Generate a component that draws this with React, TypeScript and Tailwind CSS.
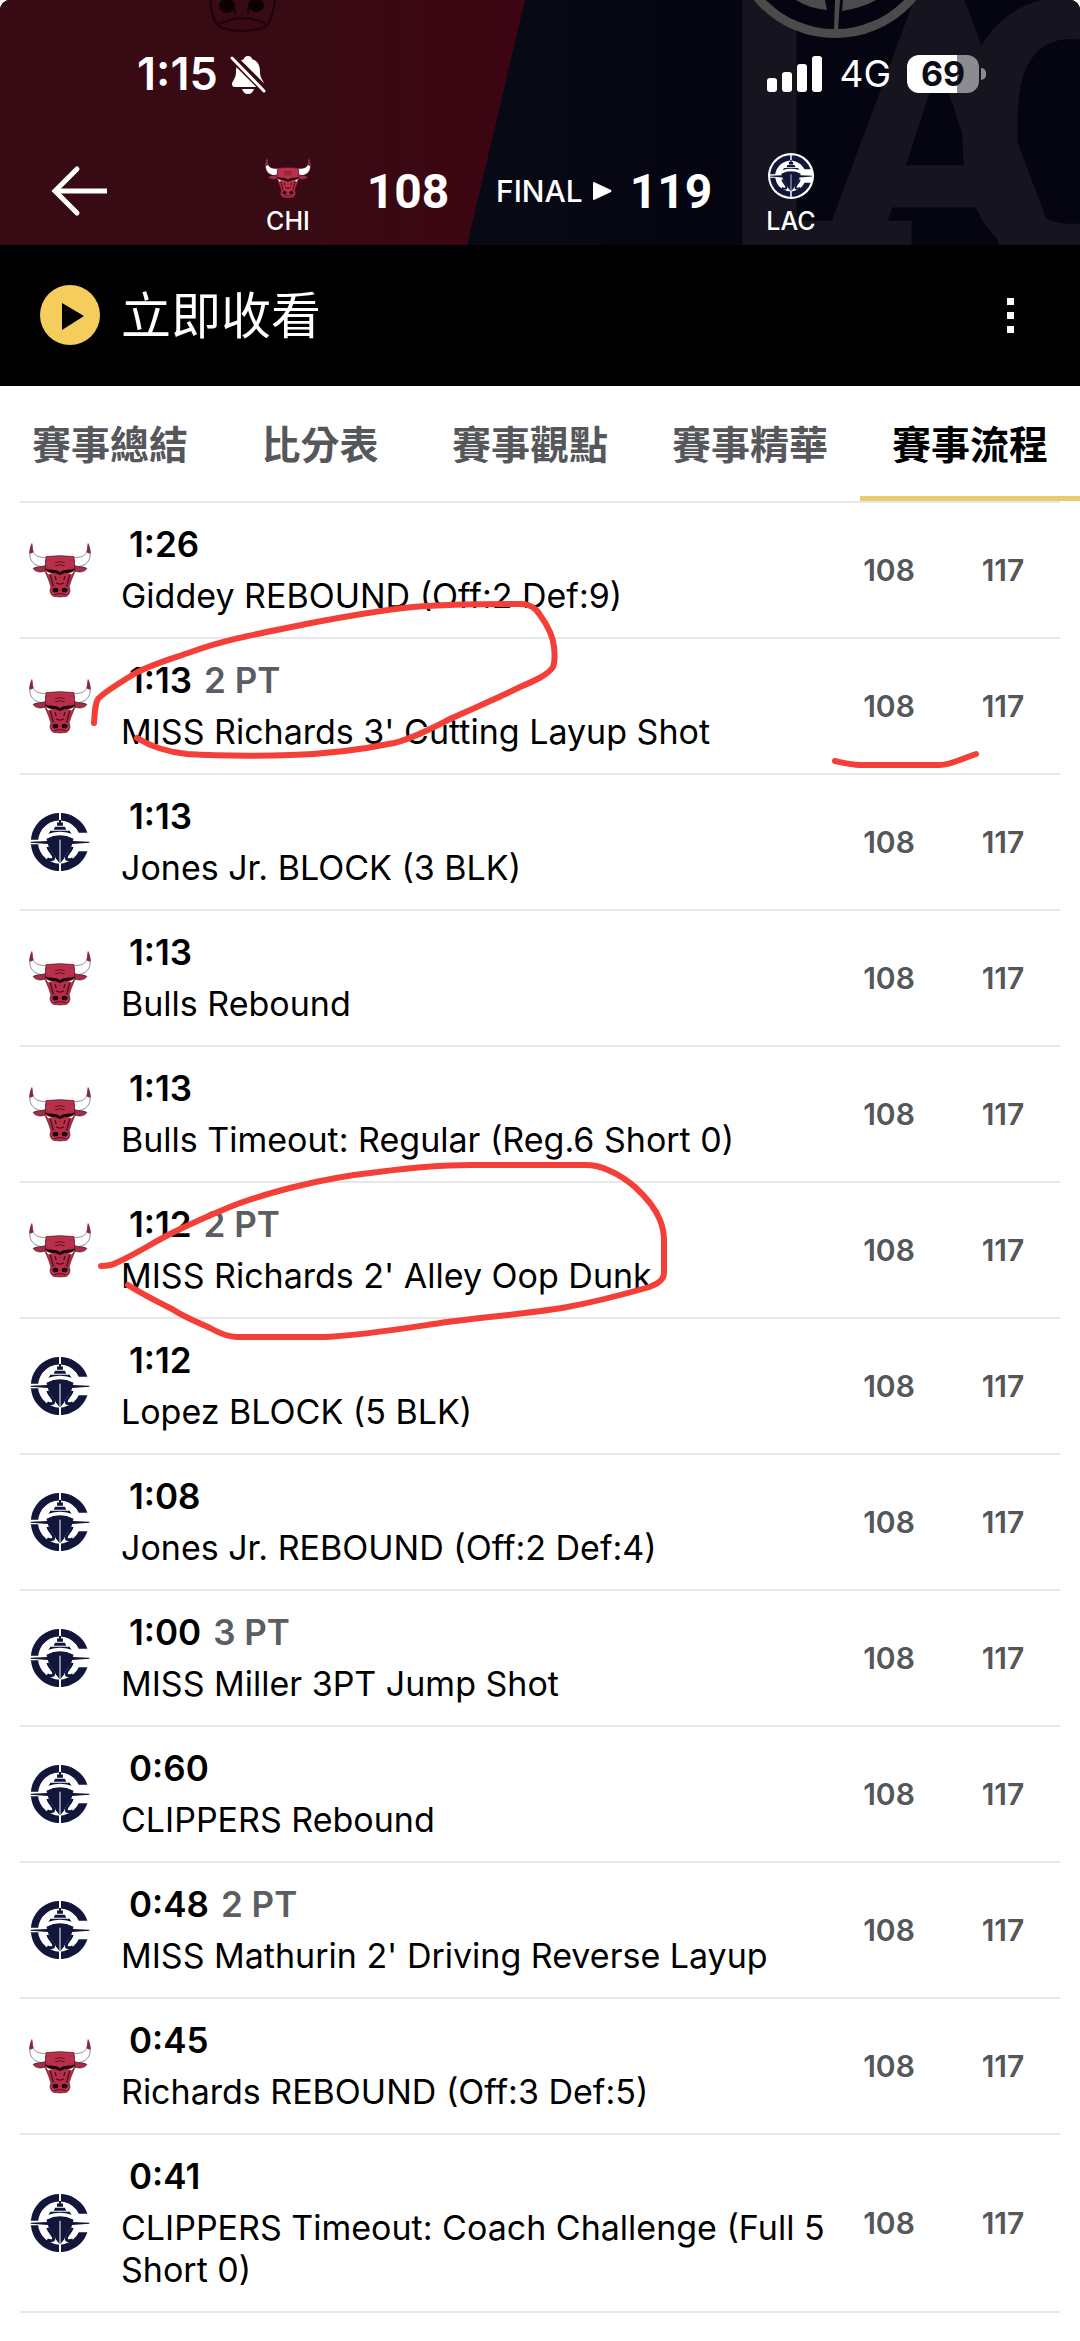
import React, { useState } from 'react';
import clsx from 'clsx';

type Team = 'CHI' | 'LAC';

interface Play {
  team: Team;
  time: string;
  tag?: string;
  text?: string;
  away: number;
  home: number;
}

const TABS = ['賽事總結', '比分表', '賽事觀點', '賽事精華', '賽事流程'];

const PLAYS: Play[] = [
  { team: 'CHI', time: '1:26', text: 'Giddey REBOUND (Off:2 Def:9)', away: 108, home: 117 },
  { team: 'CHI', time: '1:13', tag: '2 PT', text: "MISS Richards 3' Cutting Layup Shot", away: 108, home: 117 },
  { team: 'LAC', time: '1:13', text: 'Jones Jr. BLOCK (3 BLK)', away: 108, home: 117 },
  { team: 'CHI', time: '1:13', text: 'Bulls Rebound', away: 108, home: 117 },
  { team: 'CHI', time: '1:13', text: 'Bulls Timeout: Regular (Reg.6 Short 0)', away: 108, home: 117 },
  { team: 'CHI', time: '1:12', tag: '2 PT', text: "MISS Richards 2' Alley Oop Dunk", away: 108, home: 117 },
  { team: 'LAC', time: '1:12', text: 'Lopez BLOCK (5 BLK)', away: 108, home: 117 },
  { team: 'LAC', time: '1:08', text: 'Jones Jr. REBOUND (Off:2 Def:4)', away: 108, home: 117 },
  { team: 'LAC', time: '1:00', tag: '3 PT', text: 'MISS Miller 3PT Jump Shot', away: 108, home: 117 },
  { team: 'LAC', time: '0:60', text: 'CLIPPERS Rebound', away: 108, home: 117 },
  { team: 'LAC', time: '0:48', tag: '2 PT', text: "MISS Mathurin 2' Driving Reverse Layup", away: 108, home: 117 },
  { team: 'CHI', time: '0:45', text: 'Richards REBOUND (Off:3 Def:5)', away: 108, home: 117 },
  { team: 'LAC', time: '0:41', text: 'CLIPPERS Timeout: Coach Challenge (Full 5 Short 0)', away: 108, home: 117 },
];

const BullsLogo: React.FC<{ className?: string }> = ({ className }) => (
  <svg viewBox="22 40 196 174" className={className} role="img" aria-label="CHI">
    {/* horns */}
    <path d="M34 46 C22 74 24 104 52 114 C60 117 70 117 76 114 L78 88 C56 90 40 84 36 66 Z" fill="#fff" stroke="#26141a" strokeWidth="1.5" />
    <path d="M206 46 C218 74 216 104 188 114 C180 117 170 117 164 114 L162 88 C184 90 200 84 204 66 Z" fill="#fff" stroke="#26141a" strokeWidth="1.5" />
    <path d="M34 46 C28 56 26 68 27 78 L39 73 C36 66 37 54 34 46 Z M206 46 C212 56 214 68 213 78 L201 73 C204 66 203 54 206 46 Z" fill="#8a2438" />
    {/* ears */}
    <path d="M76 114 C62 118 48 116 38 122 C42 132 58 136 76 130 Z M164 114 C178 118 192 116 202 122 C198 132 182 136 164 130 Z" fill="#a82a45" stroke="#26141a" strokeWidth="2" />
    {/* head */}
    <path d="M78 86 Q120 80 162 86 C166 100 163 112 166 126 C164 140 158 148 154 160 L148 178 C154 192 148 206 138 208 Q120 211 102 208 C92 206 86 192 92 178 L86 160 C82 148 76 140 74 126 C77 112 74 100 78 86 Z" fill="#b92e48" stroke="#4a1220" strokeWidth="2" />
    <path d="M104 105 Q120 97 136 105 M106 114 Q120 108 134 114" fill="none" stroke="#5a1525" strokeWidth="3" />
    {/* brows and eyes */}
    <path d="M74 122 C90 130 106 122 120 134 C134 122 150 130 166 122 C162 134 148 136 138 136 C130 136 124 142 120 142 C116 142 110 136 102 136 C92 136 78 134 74 122 Z" fill="#160a0e" />
    <path d="M78 131 L93 138 L84 141 Z M162 131 L147 138 L156 141 Z" fill="#fff" />
    {/* nose lines */}
    <path d="M90 142 L100 178 M150 142 L140 178 M105 146 L108 158 M135 146 L132 158 M108 166 Q120 174 132 166" fill="none" stroke="#3b0d19" strokeWidth="4" />
    <ellipse cx="106" cy="188" rx="9" ry="7" fill="#160a0e" />
    <ellipse cx="134" cy="188" rx="9" ry="7" fill="#160a0e" />
    <path d="M102 202 Q120 196 138 202" fill="none" stroke="#4a1220" strokeWidth="3" />
  </svg>
);

const ClippersLogo: React.FC<{ className?: string }> = ({ className }) => (
  <svg viewBox="24 34 194 194" className={className} role="img" aria-label="LAC">
    <circle cx="121" cy="131" r="97" fill="#fff" />
    {/* broken C ring */}
    <path d="M204 103 A88 88 0 1 0 204 159 L178 159 A65 65 0 1 1 178 103 Z" fill="#11163a" />
    <path d="M118 40 H124 V72 H118 Z M118 186 H124 V222 H118 Z M30 124 H78 V138 H30 Z" fill="#fff" />
    {/* bridge */}
    <path d="M112 72 H118 V64 H124 V72 H130 V82 H112 Z M106 85 H136 L140 94 H102 Z" fill="#11163a" />
    <path d="M92 97 H150 L156 106 Q121 94 86 106 Z" fill="#11163a" />
    {/* hull */}
    <path d="M80 121 Q121 100 162 121 L160 128 L210 130 V133 L158 137 C152 156 138 166 133 182 L121 196 L109 182 C104 166 90 156 84 137 L32 133 V130 L82 128 Z" fill="#11163a" />
    <path d="M84 146 C88 160 102 168 102 178 C102 186 92 186 82 182 M158 146 C154 160 140 168 140 178 C140 186 150 186 160 182" fill="none" stroke="#11163a" strokeWidth="9" />
    <path d="M121 124 V198" stroke="#fff" strokeWidth="3" />
  </svg>
);

const TeamLogo: React.FC<{ team: Team; className?: string }> = ({ team, className }) =>
  team === 'CHI' ? <BullsLogo className={className} /> : <ClippersLogo className={className} />;

const HeaderArt = () => (
  <div className="absolute inset-0" aria-hidden="true">
    <svg viewBox="0 0 1080 245" preserveAspectRatio="none" className="absolute inset-0 h-full w-full">
      <defs>
        <linearGradient id="away" x1="0" x2="1">
          <stop offset="0.6" stopColor="#380a13" />
          <stop offset="1" stopColor="#3d0412" />
        </linearGradient>
        <linearGradient id="home" x1="0" x2="1">
          <stop offset="0.4" stopColor="#080b16" />
          <stop offset="0.65" stopColor="#050511" />
        </linearGradient>
      </defs>
      <path d="M0 0H1080V245H0Z" fill="url(#home)" />
      <path d="M0 0H525L467 245H0Z" fill="url(#away)" />
    </svg>
    <div className="absolute -top-12 left-[719px] flex font-['Roboto',sans-serif] text-[370px] leading-[370px] font-bold text-[#15141f]">
      <span className="w-[96px]">L</span>
      <span className="w-[132px]">A</span>
      <span>C</span>
    </div>
    <svg viewBox="0 0 1080 245" className="absolute inset-0 h-full w-full" fill="none">
      {/* muzzle of the large bull */}
      <path d="M210 -4C211 14 214 25 222 28Q242 34 262 28C270 25 274 14 275 -4" stroke="#1c0509" strokeWidth="2" />
      <ellipse cx="227" cy="6" rx="8" ry="7" fill="#0c0204" />
      <ellipse cx="256" cy="5" rx="8" ry="7" fill="#0c0204" />
      <path d="M219 24Q242 13 265 23M235 8V14M248 8V14" stroke="#1c0509" strokeWidth="2" />
      {/* large ring */}
      <circle cx="835" cy="-68" r="106" fill="#4b4b4b" />
      <circle cx="835" cy="-68" r="97" fill="#050511" />
      <path d="M796 0Q808 8 827 10L825 0ZM843 0L842 11Q862 8 876 0Z" fill="#4b4b4b" />
      <path d="M834 30L835 0H840L838 30Z" fill="#4b4b4b" />
    </svg>
  </div>
);

const StatusBar = () => (
  <div className="relative flex items-center justify-between pt-[52px] pr-[94px] pl-[137px] text-white">
    <div className="flex items-center gap-3">
      <span className="text-[45px] leading-[44px] font-semibold">1:15</span>
      <svg width="36" height="40" viewBox="0 0 36 40" aria-label="Silent">
        <path d="M18 2C21 2 22 4 22 5C28 7 30 12 30 18C30 25 34 27 34 30C34 32 33 33 31 33H5C3 33 2 32 2 30C2 27 6 25 6 18C6 12 8 7 14 5C14 4 15 2 18 2Z" fill="#fff" />
        <path d="M12 35H24C23 38 21 40 18 40C15 40 13 38 12 35Z" fill="#fff" />
        <path d="M2 3L35 36" stroke="#380a13" strokeWidth="8" />
        <path d="M2 4L34 37" stroke="#fff" strokeWidth="3" strokeLinecap="round" />
      </svg>
    </div>
    <div className="flex items-center">
      <svg width="56" height="36" viewBox="0 0 56 36" fill="#fff" aria-label="Signal">
        <rect x="0" y="22" width="10" height="14" rx="3" />
        <rect x="15" y="16" width="10" height="20" rx="3" />
        <rect x="30" y="8" width="10" height="28" rx="3" />
        <rect x="45" y="0" width="10" height="36" rx="3" />
      </svg>
      <span className="ml-4 text-[37px] leading-[44px] font-normal">4G</span>
      <span className="ml-4 flex h-[38px] w-[72px] items-center justify-center rounded-xl bg-linear-to-r from-white from-70% to-[#8b8b90] to-70% text-[34px] leading-[38px] font-bold text-[#0d0d18]">
        69
      </span>
      <span className="ml-[2px] h-3 w-[5px] rounded-r-full bg-[#8b8b90]" />
    </div>
  </div>
);

const ScoreHeader = () => (
  <div className="relative flex items-start pt-[49px] text-white">
    <button type="button" aria-label="Back" className="mt-[18px] ml-[50px] h-[56px] w-[60px]">
      <svg width="60" height="56" viewBox="0 0 60 56" fill="none" stroke="#fff" strokeWidth="5" strokeLinecap="round">
        <path d="M27 6L5 28L27 50" />
        <path d="M5 28H57" strokeLinecap="butt" />
      </svg>
    </button>
    <div className="ml-[128px] flex w-[100px] flex-col items-center pt-2">
      <BullsLogo className="mt-1 h-[42px] w-12" />
      <span className="mt-[6px] text-[25px] leading-8 font-medium">CHI</span>
    </div>
    <span className="mt-[17px] w-[140px] text-center font-['Roboto',sans-serif] text-[48px] leading-[60px] font-bold">108</span>
    <a href="#final" className="mt-[28px] ml-[18px] flex w-[116px] items-center justify-between text-[30px] leading-9 font-medium">
      FINAL
      <svg width="19" height="18" viewBox="0 0 19 18" fill="#fff" aria-hidden="true">
        <path d="M1 0L18 8Q19 9 18 10L1 18Q0 18 0 17V1Q0 0 1 0Z" />
      </svg>
    </a>
    <span className="mt-[17px] w-[118px] text-center font-['Roboto',sans-serif] text-[48px] leading-[60px] font-bold">119</span>
    <div className="ml-[11px] flex w-[100px] flex-col items-center pt-2">
      <ClippersLogo className="size-[46px]" />
      <span className="mt-[6px] text-[25px] leading-8 font-medium">LAC</span>
    </div>
  </div>
);

const WatchBar = () => (
  <div className="flex h-[141px] items-center justify-between bg-black pr-[54px] pl-10 text-white">
    <button type="button" className="flex items-center gap-5 text-[50px] leading-[60px] font-normal">
      <svg width="61" height="61" viewBox="0 0 61 61" aria-hidden="true">
        <circle cx="30" cy="30" r="30" fill="#f4cd5d" />
        <path d="M22 18L44 31L22 45Z" fill="#000" />
      </svg>
      立即收看
    </button>
    <button type="button" aria-label="More" className="flex w-8 flex-col items-center gap-[7px] py-2">
      <span className="size-[7px] bg-white" />
      <span className="size-[7px] bg-white" />
      <span className="size-[7px] bg-white" />
    </button>
  </div>
);

const Annotations = () => (
  <svg
    viewBox="0 0 1080 2341"
    className="pointer-events-none absolute top-0 left-0 w-full"
    fill="none"
    stroke="#f43f38"
    strokeWidth="6"
    strokeLinecap="round"
    strokeLinejoin="round"
    aria-hidden="true"
  >
    <path d="M94 723C95 710 95 704 98 699C104 692 118 684 134 674C150 665 168 660 191 652C230 638 268 632 306 624C342 617 376 611 413 607C450 604 484 604 520 604C530 604 536 608 540 615C548 626 553 636 554 647C555 656 555 662 553 667C548 675 534 681 520 687C498 698 474 708 452 718C432 728 414 738 394 743C360 750 326 754 291 755C256 756 220 756 187 754C168 752 150 746 137 738" />
    <path d="M835 761C844 763 852 765 860 765H940C950 765 956 761 976 754" />
    <path d="M101 1266C107 1266 112 1265 116 1263C136 1254 154 1242 172 1233C190 1224 206 1217 225 1209C246 1200 270 1193 294 1187C322 1180 350 1175 378 1172C408 1168 440 1165 470 1165H585C594 1165 602 1167 608 1170C620 1175 628 1181 635 1187C647 1198 656 1210 660 1220C663 1228 664 1234 664 1240V1273C664 1280 656 1285 646 1288C618 1296 590 1303 562 1308C524 1314 486 1317 447 1322C406 1328 366 1335 325 1337H237C228 1337 219 1333 210 1328C197 1322 184 1317 172 1309C156 1301 142 1294 128 1285" />
  </svg>
);

const App: React.FC = () => {
  const [activeTab, setActiveTab] = useState('賽事流程');

  return (
    <div className="relative h-screen overflow-hidden bg-white font-['Inter','Noto_Sans_CJK_TC',sans-serif] text-black">
      <header className="relative h-[245px] overflow-hidden rounded-t-[10px] bg-black">
        <HeaderArt />
        <StatusBar />
        <ScoreHeader />
      </header>

      <WatchBar />

      <nav className="flex h-[115px] justify-between">
        {TABS.map((tab) => (
          <button
            key={tab}
            type="button"
            onClick={() => setActiveTab(tab)}
            className={clsx(
              'min-w-[200px] border-b-[5px] px-8 pt-2 text-[39px] leading-[56px] font-semibold whitespace-nowrap',
              activeTab === tab ? 'border-[#e8cc6c] text-black' : 'border-transparent text-[#55575a]'
            )}
          >
            {tab}
          </button>
        ))}
      </nav>

      <main className="px-5">
        <table className="w-full table-fixed border-separate border-spacing-0 border-t-2 border-[#e7e7e7] text-left">
          <colgroup>
            <col className="w-[101px]" />
            <col />
            <col className="w-[114px]" />
            <col className="w-[114px]" />
          </colgroup>
          <tbody>
            {PLAYS.map((play, i) => (
              <tr key={i} className="[&>td]:border-b-2 [&>td]:border-[#e7e7e7]">
                <td>
                  <TeamLogo
                    team={play.team}
                    className={clsx('ml-2', play.team === 'CHI' ? 'h-[58px] w-16' : 'size-16')}
                  />
                </td>
                <td className="pt-5 pb-5">
                  <div className="mb-[10px] flex gap-3 pl-2 text-[35px] leading-[42px] font-semibold">
                    <span>{play.time}</span>
                    {play.tag && <span className="text-[#5b5d60]">{play.tag}</span>}
                  </div>
                  <p className="text-[34px] leading-[42px]">{play.text}</p>
                </td>
                <td className="text-center text-[30px] leading-9 font-semibold text-[#55575a]">{play.away}</td>
                <td className="text-center text-[30px] leading-9 font-semibold text-[#55575a]">{play.home}</td>
              </tr>
            ))}
            <tr>
              <td />
              <td className="pt-5 pl-2 text-[35px] leading-[42px] font-semibold">0:41</td>
              <td />
              <td />
            </tr>
          </tbody>
        </table>
      </main>

      <Annotations />
    </div>
  );
};

export default App;
